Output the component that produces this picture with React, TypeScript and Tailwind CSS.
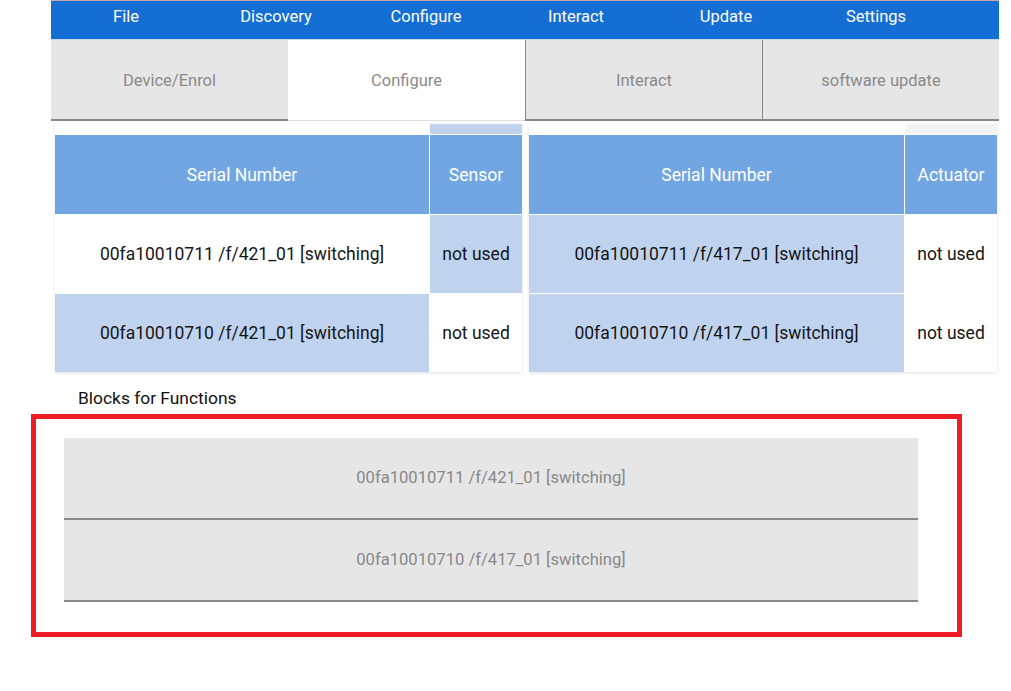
import React from "react";

const menu = ["File", "Discovery", "Configure", "Interact", "Update", "Settings"];

function Cell({ text, bg, w }: { text: string; bg: string; w: string }) {
  return (
    <div className={`${w} ${bg} h-[78px] flex items-center justify-center text-[17.5px] text-[#151515]`}>
      {text}
    </div>
  );
}

export default function App() {
  return (
    <div className="w-[1011px] h-[691px] bg-white overflow-hidden" style={{ fontFamily: "Roboto, 'Liberation Sans', sans-serif" }}>
      <div className="pl-[51px]">
        <div className="w-[948px] h-[39px] bg-[#146ed4] border-t border-[#c9a4a8] flex">
          {menu.map((m) => (
            <div key={m} className="w-[150px] flex items-center justify-center text-white text-[16.5px] pb-[6px]">
              {m}
            </div>
          ))}
        </div>
        <div className="w-[948px] h-[82px] flex border-t border-[#c8d6e6] text-[16.5px]">
          <div className="w-[237px] pt-[4px] bg-[#e6e6e6] border-b-2 border-[#888] flex items-center justify-center text-[#8a8a8a]">Device/Enrol</div>
          <div className="w-[237px] pt-[2px] bg-white border-b border-[#dedede] flex items-center justify-center text-[#8a8a8a]">Configure</div>
          <div className="w-[237px] pt-[4px] bg-[#e6e6e6] border-b-2 border-l border-[#888] flex items-center justify-center text-[#8a8a8a]">Interact</div>
          <div className="w-[237px] pt-[4px] bg-[#e6e6e6] border-b-2 border-l border-[#888] flex items-center justify-center text-[#8a8a8a]">software update</div>
        </div>
      </div>

      <div className="flex pl-[55px] pt-[3px] gap-[7px]">
        <div className="w-[467px] shadow-[0_1px_3px_rgba(0,0,0,0.12)]">
          <div className="flex h-[11px]">
            <div className="w-[375px]" />
            <div className="w-[92px] bg-[#bfd3ee] border-b border-white" />
          </div>
          <div className="flex border-b border-white">
            <div className="w-[375px] h-[79px] pt-[2px] bg-[#72a6e2] border-r border-white flex items-center justify-center text-white text-[17.5px]">Serial Number</div>
            <div className="w-[92px] h-[79px] pt-[2px] bg-[#72a6e2] flex items-center justify-center text-white text-[17.5px]">Sensor</div>
          </div>
          <div className="flex border-b border-white">
            <Cell text="00fa10010711 /f/421_01 [switching]" bg="bg-white border-r border-white" w="w-[375px]" />
            <Cell text="not used" bg="bg-[#bfd3ee]" w="w-[92px]" />
          </div>
          <div className="flex">
            <Cell text="00fa10010710 /f/421_01 [switching]" bg="bg-[#bfd3ee] border-r border-white" w="w-[375px]" />
            <Cell text="not used" bg="bg-white" w="w-[92px]" />
          </div>
        </div>

        <div className="w-[468px] shadow-[0_1px_3px_rgba(0,0,0,0.12)]">
          <div className="flex h-[11px]">
            <div className="w-[376px]" />
            <div className="w-[92px] bg-[#f3f3f3] border-b border-white" />
          </div>
          <div className="flex border-b border-white">
            <div className="w-[376px] h-[79px] pt-[2px] bg-[#72a6e2] border-r border-white flex items-center justify-center text-white text-[17.5px]">Serial Number</div>
            <div className="w-[92px] h-[79px] pt-[2px] bg-[#72a6e2] flex items-center justify-center text-white text-[17.5px]">Actuator</div>
          </div>
          <div className="flex border-b border-white">
            <Cell text="00fa10010711 /f/417_01 [switching]" bg="bg-[#bfd3ee] border-r border-white" w="w-[376px]" />
            <Cell text="not used" bg="bg-white" w="w-[92px]" />
          </div>
          <div className="flex">
            <Cell text="00fa10010710 /f/417_01 [switching]" bg="bg-[#bfd3ee] border-r border-white" w="w-[376px]" />
            <Cell text="not used" bg="bg-white" w="w-[92px]" />
          </div>
        </div>
      </div>

      <div className="pl-[78px] pt-[16px] h-[42px] text-[17.4px] text-[#111] leading-[20px]">Blocks for Functions</div>

      <div className="ml-[31px] w-[931px] h-[223px] border-[5px] border-[#ee1c25] pl-[28px] pt-[19px]">
        <div className="w-[854px] h-[82px] bg-[#e6e6e6] border-b-2 border-[#888] flex items-center justify-center text-[16.6px] text-[#888]">
          00fa10010711 /f/421_01 [switching]
        </div>
        <div className="w-[854px] h-[82px] bg-[#e6e6e6] border-b-2 border-[#888] flex items-center justify-center text-[16.6px] text-[#888]">
          00fa10010710 /f/417_01 [switching]
        </div>
      </div>
    </div>
  );
}
